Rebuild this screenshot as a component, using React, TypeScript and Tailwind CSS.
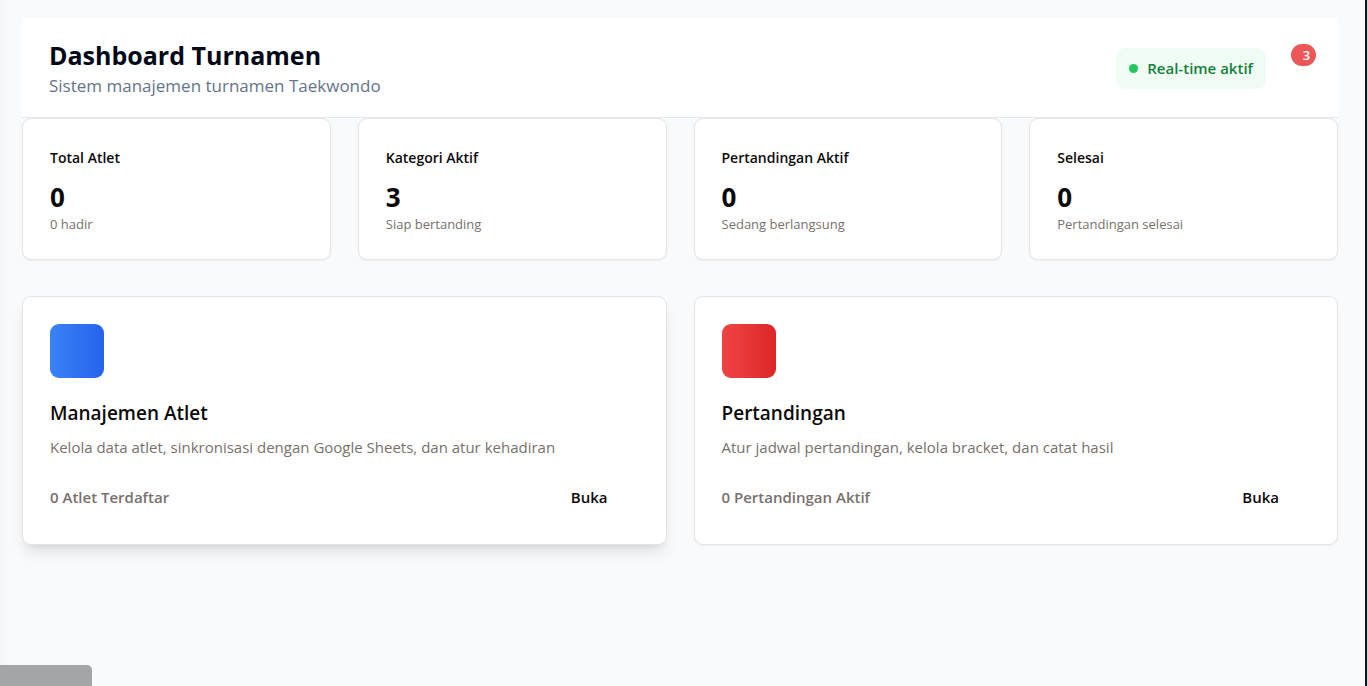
type Stat = { title: string; value: number; note: string };
type Action = {
  title: string;
  description: string;
  status: string;
  tile: string;
  shadow: string;
};

const stats: Stat[] = [
  { title: "Total Atlet", value: 0, note: "0 hadir" },
  { title: "Kategori Aktif", value: 3, note: "Siap bertanding" },
  { title: "Pertandingan Aktif", value: 0, note: "Sedang berlangsung" },
  { title: "Selesai", value: 0, note: "Pertandingan selesai" },
];

const actions: Action[] = [
  {
    title: "Manajemen Atlet",
    description: "Kelola data atlet, sinkronisasi dengan Google Sheets, dan atur kehadiran",
    status: "0 Atlet Terdaftar",
    tile: "from-[#3b82f6] to-[#2563eb]",
    shadow: "shadow-[0_10px_15px_-3px_rgb(0_0_0/0.1),0_4px_6px_-4px_rgb(0_0_0/0.1)]",
  },
  {
    title: "Pertandingan",
    description: "Atur jadwal pertandingan, kelola bracket, dan catat hasil",
    status: "0 Pertandingan Aktif",
    tile: "from-[#ef4444] to-[#dc2626]",
    shadow: "shadow-[0_1px_2px_0_rgb(0_0_0/0.05)]",
  },
];

function StatCard({ title, value, note }: Stat) {
  return (
    <article className="rounded-[9px] border border-[#e7e5e4] bg-white p-[27px] pb-[26px] shadow-[0_1px_2px_0_rgb(0_0_0/0.05)]">
      <h2 className="text-[14px] leading-6 font-semibold">{title}</h2>
      <p className="mt-[9px] text-[26px] leading-9 font-bold">{value}</p>
      <p className="text-[13px] leading-[18px] text-[#78716c]">{note}</p>
    </article>
  );
}

function ActionCard({ title, description, status, tile, shadow }: Action) {
  return (
    <article className={`rounded-[9px] border border-[#e7e5e4] bg-white p-[27px] ${shadow}`}>
      <div className={`size-[54px] rounded-[9px] bg-linear-to-r ${tile}`} />
      <h2 className="mt-[22px] text-[19px] leading-[26px] font-semibold">{title}</h2>
      <p className="mt-2 text-[15px] leading-[26px] text-[#78716c]">{description}</p>
      <div className="mt-[17px] flex items-center justify-between">
        <span className="text-[15px] leading-6 font-semibold text-[#78716c]">{status}</span>
        <button type="button" className="h-10 pr-[31px] pl-3 text-[15px] leading-6 font-semibold">
          Buka
        </button>
      </div>
    </article>
  );
}

export default function App() {
  return (
    <div className="min-h-screen border-r-2 border-[#0b1526] bg-[#f8fafc] font-['Open_Sans','Noto_Sans',sans-serif] text-[#0c0a09]">
      <div className="min-h-screen bg-linear-to-r from-[#f5f7f9] to-[#f8fafc] to-[10px] pt-[18px] pr-[27px] pl-[22px]">
        <header className="flex items-center justify-between border-b border-[#e2e8f0] bg-white pt-[19px] pr-[22px] pb-[18px] pl-[27px]">
          <div>
            <h1 className="text-[25px] leading-9 font-bold text-[#020817]">Dashboard Turnamen</h1>
            <p className="text-[17px] leading-[26px] text-[#64748b]">Sistem manajemen turnamen Taekwondo</p>
          </div>
          <div className="flex items-center gap-[25px]">
            <div className="flex items-center gap-[9px] rounded-[9px] bg-[#f0fdf4] px-[13px] py-2">
              <span className="size-[9px] rounded-full bg-[#22c55e]" />
              <span className="text-[15px] leading-[25px] font-semibold text-[#15803d]">Real-time aktif</span>
            </div>
            <button
              type="button"
              aria-label="Notifikasi: 3"
              className="mb-[27px] h-[22px] w-[25px] rounded-full bg-[#ec5757] pl-[6px] text-[13px] leading-[22px] font-semibold text-white"
            >
              3
            </button>
          </div>
        </header>
        <main>
          <section className="grid grid-cols-4 gap-[27px]">
            {stats.map((stat) => (
              <StatCard key={stat.title} {...stat} />
            ))}
          </section>
          <section className="mt-9 grid grid-cols-2 gap-[27px]">
            {actions.map((action) => (
              <ActionCard key={action.title} {...action} />
            ))}
          </section>
        </main>
      </div>
      <div className="fixed bottom-0 left-0 h-[21px] w-[92px] rounded-tr-[5px] bg-[#a3a6a8]" />
    </div>
  );
}
